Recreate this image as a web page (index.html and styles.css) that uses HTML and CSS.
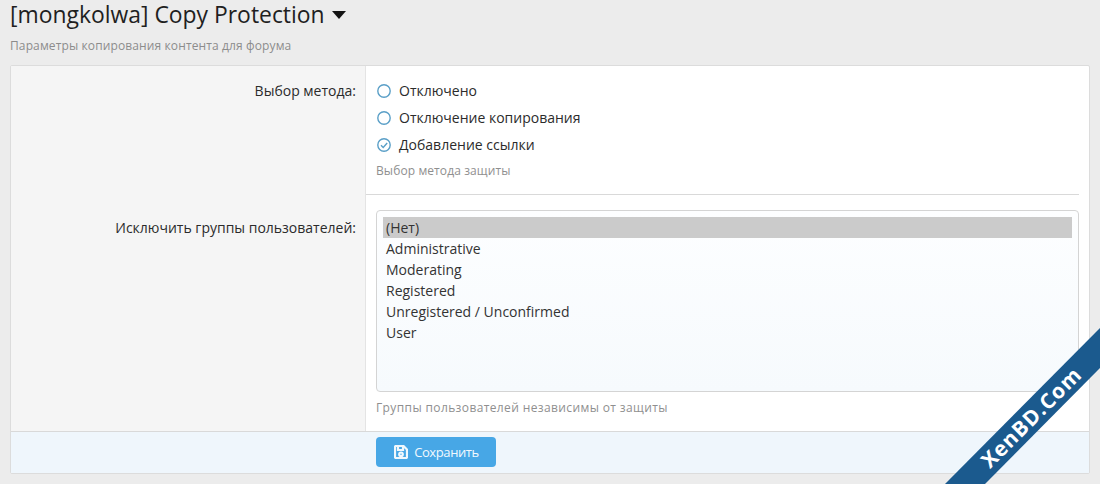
FILE: index.html
```html
<!DOCTYPE html>
<html lang="ru">
<head>
<meta charset="utf-8">
<title>Copy Protection</title>
<link rel="stylesheet" href="styles.css">
</head>
<body>
<header class="head">
  <h1 class="title">[mongkolwa] Copy Protection <span class="caret"></span></h1>
  <p class="subtitle">Параметры копирования контента для форума</p>
</header>
<form class="block">
  <div class="row row-first">
    <div class="label">Выбор метода:</div>
    <div class="field field-first">
      <ul class="choices">
        <li class="choice"><svg class="radio" viewBox="0 0 14 14"><circle cx="7" cy="7" r="6.200"/></svg>Отключено</li>
        <li class="choice"><svg class="radio" viewBox="0 0 14 14"><circle cx="7" cy="7" r="6.200"/></svg>Отключение копирования</li>
        <li class="choice"><svg class="radio" viewBox="0 0 14 14"><circle cx="7" cy="7" r="6.200"/><path d="M4 7.200l2.200 2.200L10.200 5"/></svg>Добавление ссылки</li>
      </ul>
      <p class="hint">Выбор метода защиты</p>
    </div>
  </div>
  <div class="row row-second">
    <div class="label label-second">Исключить группы пользователей:</div>
    <div class="field field-second">
      <div class="list">
        <div class="opt opt-on">(Нет)</div>
        <div class="opt">Administrative</div>
        <div class="opt">Moderating</div>
        <div class="opt">Registered</div>
        <div class="opt">Unregistered / Unconfirmed</div>
        <div class="opt">User</div>
      </div>
      <p class="hint hint-second">Группы пользователей независимы от защиты</p>
    </div>
  </div>
  <div class="footer">
    <button type="button" class="save">
      <svg class="save-icon" viewBox="0 0 14 14"><path d="M2 1h7.500L13 4.500V12a1 1 0 0 1-1 1H2a1 1 0 0 1-1-1V2a1 1 0 0 1 1-1z"/><path d="M4 1.500V5h5V1.500"/><circle cx="7" cy="9.300" r="1.800"/></svg>Сохранить
    </button>
  </div>
</form>
<div class="ribbon">
  <svg class="ribbon-band" viewBox="0 0 155 164"><polygon points="0,164 155,8 155,48 40,164"/></svg>
  <span class="ribbon-text">XenBD.Com</span>
</div>
</body>
</html>
```
FILE: styles.css
```css
* { box-sizing: border-box; }
html, body { height: 100%; }
body {
  margin: 0;
  padding: 0 10px;
  background: #ececec;
  color: #2b2b2b;
  font-family: "Open Sans", "Noto Sans", sans-serif;
  font-size: 14px;
  overflow: hidden;
  position: relative;
}
.head { height: 65px; }
.title {
  margin: 0;
  font-size: 22.900px;
  font-weight: 400;
  line-height: 30px;
  color: #1f1f1f;
}
.caret {
  display: inline-block;
  width: 0;
  height: 0;
  border: 7px solid transparent;
  border-top: 8px solid #141414;
  border-bottom: 0;
  vertical-align: 4px;
  margin-left: 1px;
}
.subtitle {
  margin: 8px 0 0;
  font-size: 12px;
  line-height: 16px;
  color: #8c8c8c;
  letter-spacing: 0.12px;
}
.block {
  width: 1080px;
  height: 409px;
  background: #fff;
  border: 1px solid #dcdcdc;
  border-radius: 2px;
  display: flex;
  flex-direction: column;
  overflow: hidden;
}
.row { display: flex; }
.row-first { height: 129px; }
.row-second { height: 236px; }
.label {
  width: 355px;
  flex: none;
  padding: 15px 9px 0 0;
  background: #f5f5f5;
  border-right: 1px solid #e4e4e4;
  text-align: right;
  line-height: 20px;
}
.label-second { padding-top: 23px; }
.field { flex: 1; margin-right: 10px; }
.field-first { padding: 11px 0 0 10px; border-bottom: 1px solid #d9d9d9; }
.field-second { padding: 15px 0 0 10px; }
.choices { margin: 0; padding: 0 0 0 1px; list-style: none; }
.choice {
  display: flex;
  align-items: center;
  height: 27px;
}
.radio {
  width: 14px;
  height: 14px;
  margin-right: 8px;
  flex: none;
  fill: none;
  stroke: #5a9fc7;
  stroke-width: 1.400;
}
.hint {
  margin: 5px 0 0;
  font-size: 12px;
  line-height: 16px;
  color: #8f8f8f;
  letter-spacing: 0.1px;
}
.hint-second { margin-top: 8px; letter-spacing: 0.38px; }
.list {
  height: 182px;
  padding: 6px;
  border: 1px solid #d4d4d4;
  border-radius: 4px;
  background: linear-gradient(#fdfeff, #f6fafd);
}
.opt {
  height: 21px;
  line-height: 21px;
  padding-left: 3px;
  color: #333;
}
.opt-on { background: #cbcbcb; }
.footer {
  height: 42px;
  flex: none;
  padding: 5px 0 0 365px;
  background: #eff6fc;
  border-top: 1px solid #d9d9d9;
}
.save {
  display: flex;
  align-items: center;
  justify-content: center;
  gap: 6px;
  width: 120px;
  height: 30px;
  padding: 0 0 0 1px;
  border: 0;
  border-radius: 4px;
  background: #47a7e6;
  color: #f2f9fe;
  font: inherit;
  font-size: 13px;
  letter-spacing: -0.4px;
}
.save-icon {
  width: 14px;
  height: 14px;
  fill: none;
  stroke: #f0f8fd;
  stroke-width: 2.200;
}
.ribbon {
  position: absolute;
  right: 0;
  bottom: 0;
  width: 155px;
  height: 164px;
}
.ribbon-band { display: block; width: 155px; height: 164px; fill: #1b5a8e; }
.ribbon-text {
  position: absolute;
  left: 11px;
  top: 82px;
  width: 150px;
  text-align: center;
  color: #fff;
  font-family: "Open Sans", sans-serif;
  font-weight: 700;
  font-size: 21px;
  line-height: 30px;
  letter-spacing: 1px;
  transform: rotate(-45deg);
}
```
